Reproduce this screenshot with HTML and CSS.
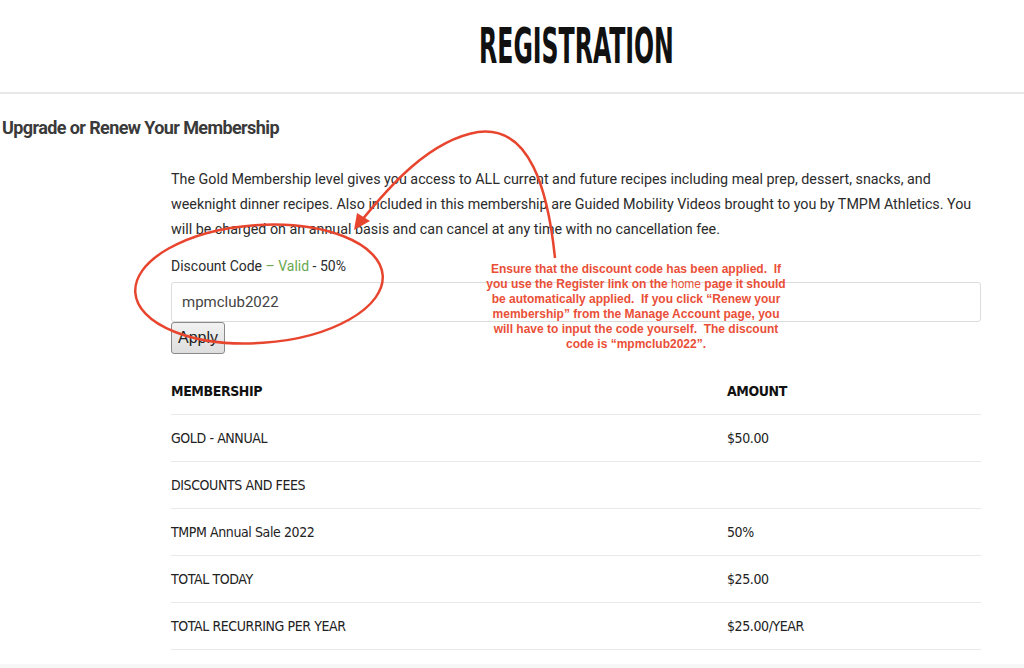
FILE: index.html
```html
<!DOCTYPE html>
<html lang="en">
<head>
    <meta charset="UTF-8">
    <meta name="viewport" content="width=device-width, initial-scale=1.0">
    <title>Registration</title>
    <link rel="stylesheet" href="styles.css">
</head>
<body>
    <header class="page-header">
        <h1 class="page-title">Registration</h1>
    </header>

    <main class="content">
        <h2 class="section-title">Upgrade or Renew Your Membership</h2>

        <div class="checkout">
            <p class="level-desc">The Gold Membership level gives you access to ALL current and future recipes including meal prep, dessert, snacks, and weeknight dinner recipes. Also included in this membership are Guided Mobility Videos brought to you by TMPM Athletics. You will be charged on an annual basis and can cancel at any time with no cancellation fee.</p>

            <div class="discount">
                <label class="discount-label" for="code">Discount Code <span class="valid">– Valid</span> - 50%</label>
                <input class="discount-input" type="text" id="code" value="mpmclub2022">
                <button class="apply-btn">Apply</button>
            </div>

            <table class="summary">
                <tr>
                    <th class="col-name">Membership</th>
                    <th>Amount</th>
                </tr>
                <tr><td>GOLD - ANNUAL</td><td>$50.00</td></tr>
                <tr><td>DISCOUNTS AND FEES</td><td></td></tr>
                <tr><td>TMPM Annual Sale 2022</td><td>50%</td></tr>
                <tr><td>TOTAL TODAY</td><td>$25.00</td></tr>
                <tr><td>TOTAL RECURRING PER YEAR</td><td>$25.00/YEAR</td></tr>
            </table>
        </div>
    </main>

    <div class="page-footer"></div>

    <!-- markup drawn over the screenshot -->
    <svg class="markup" width="1024" height="668" viewBox="0 0 1024 668">
        <ellipse cx="259" cy="284" rx="124" ry="59" transform="rotate(-4 259 284)" fill="none" stroke="#e8452f" stroke-width="2.5"/>
        <path d="M555 258 C 548 190, 530 125, 478 132 C 430 140, 390 185, 358 225" fill="none" stroke="#e8452f" stroke-width="2.5"/>
        <polygon points="354,230 357,213 370,221" fill="#e8452f"/>
    </svg>
    <p class="note">Ensure that the discount code has been applied.  If<br>you use the Register link on the <span class="note-home">home</span> page it should<br>be automatically applied.  If you click “Renew your<br>membership” from the Manage Account page, you<br>will have to input the code yourself.  The discount<br>code is “mpmclub2022”.</p>
</body>
</html>
```

FILE: styles.css
```css
body {
    margin: 0;
    font-family: Roboto, "Liberation Sans", sans-serif;
    color: #333;
    background: #fff;
    position: relative;
    height: 668px;
    overflow: hidden;
}
.page-header {
    padding: 21px 0 21px 128px;
    text-align: center;
    border-bottom: 2px solid #e8e8e8;
}
.page-title {
    display: inline-block;
    margin: 0;
    font-family: "DejaVu Sans Condensed", "Liberation Sans Narrow", sans-serif;
    font-size: 50px;
    line-height: 50px;
    font-weight: bold;
    text-transform: uppercase;
    color: #111;
    transform: scaleX(0.525);
}
.content {
    padding: 0 0 0 2px;
}
.section-title {
    margin: 22px 0 0;
    font-family: Roboto, "Liberation Sans", sans-serif;
    font-size: 18px;
    line-height: 24px;
    font-weight: bold;
    letter-spacing: -0.6px;
    color: #3a3a3a;
}
.checkout {
    width: 810px;
    margin: 27px 0 0 169px;
}
.level-desc {
    margin: 0 0 12px;
    font-size: 14.3px;
    line-height: 25px;
    color: #2b2b2b;
}
.discount-label {
    display: block;
    font-size: 14px;
    line-height: 25px;
    margin-bottom: 3px;
    color: #2b2b2b;
}
.valid {
    color: #6aa84f;
}
.discount-input {
    display: block;
    box-sizing: border-box;
    width: 810px;
    height: 40px;
    padding: 0 10px;
    border: 1px solid #dcdcdc;
    border-radius: 3px;
    font-family: Roboto, "Liberation Sans", sans-serif;
    font-size: 15px;
    color: #444;
    outline: none;
}
.apply-btn {
    display: block;
    height: 32px;
    padding: 0 6px;
    font-family: "Liberation Sans", Arial, sans-serif;
    font-size: 16px;
    color: #222;
    background: linear-gradient(#f2f2f2, #dedede);
    border: 1px solid #8a8a8a;
    border-radius: 3px;
}
.summary {
    width: 810px;
    margin-top: 14px;
    border-collapse: collapse;
    font-family: "DejaVu Sans Condensed", "Liberation Sans Narrow", sans-serif;
    font-size: 14px;
    letter-spacing: -0.4px;
    color: #222;
}
.summary th,
.summary td {
    height: 46px;
    padding: 0;
    text-align: left;
    border-bottom: 1px solid #e9e9e9;
}
.summary th {
    font-weight: bold;
    text-transform: uppercase;
    color: #111;
}
.col-name {
    width: 556px;
}
.page-footer {
    margin-top: 14px;
    height: 20px;
    background: #f7f7f7;
}
.markup {
    position: absolute;
    top: 0;
    left: 0;
    pointer-events: none;
}
.note {
    position: absolute;
    top: 262px;
    left: 471px;
    width: 330px;
    margin: 0;
    text-align: center;
    white-space: pre-wrap;
    font-family: "Liberation Sans", Arial, sans-serif;
    font-size: 12px;
    line-height: 15px;
    font-weight: bold;
    color: #ea4f38;
}
.note-home {
    font-weight: normal;
}
```
